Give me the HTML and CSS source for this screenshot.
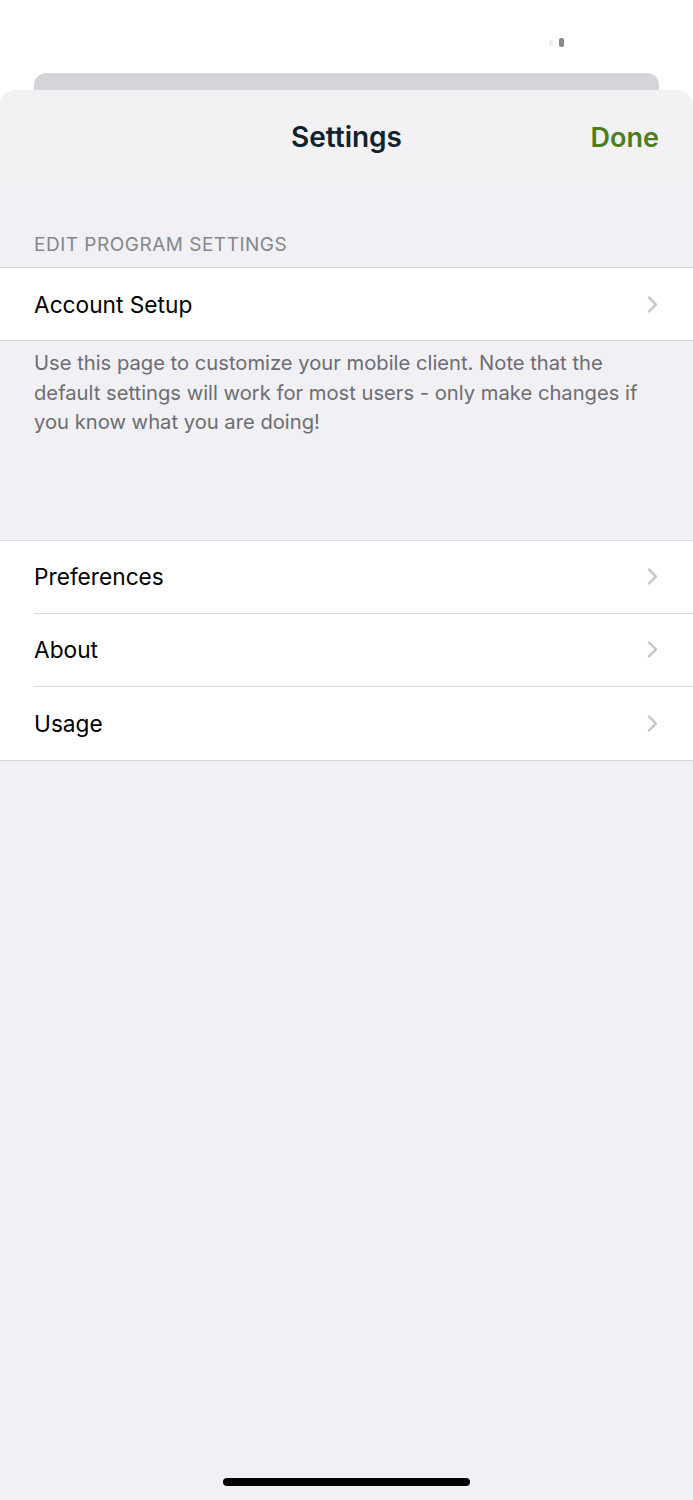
FILE: index.html
```html
<!DOCTYPE html>
<html lang="en" dir="ltr">

<head>
    <meta charset="utf-8">
    <title>Settings</title>
    <link rel="stylesheet" href="styles.css">
</head>

<body>
    <div id="status">
        <span class="dot small"></span>
        <span class="dot big"></span>
    </div>
    <div id="backcard"></div>

    <div id="sheet">
        <div id="navbar">
            <span class="spacer"></span>
            <h1>Settings</h1>
            <span id="done">Done</span>
        </div>

        <div class="section-label">EDIT PROGRAM SETTINGS</div>
        <div class="group">
            <div class="row">
                <span>Account Setup</span>
                <svg class="chevron" width="11" height="17" viewBox="0 0 11 17"><path d="M2 1.5 L9 8.5 L2 15.5" /></svg>
            </div>
        </div>
        <div class="section-footer">Use this page to customize your mobile client. Note that the default settings will work for most users - only make changes if you know what you are doing!</div>

        <div class="group second">
            <div class="row">
                <span>Preferences</span>
                <svg class="chevron" width="11" height="17" viewBox="0 0 11 17"><path d="M2 1.5 L9 8.5 L2 15.5" /></svg>
            </div>
            <div class="row">
                <span>About</span>
                <svg class="chevron" width="11" height="17" viewBox="0 0 11 17"><path d="M2 1.5 L9 8.5 L2 15.5" /></svg>
            </div>
            <div class="row">
                <span>Usage</span>
                <svg class="chevron" width="11" height="17" viewBox="0 0 11 17"><path d="M2 1.5 L9 8.5 L2 15.5" /></svg>
            </div>
        </div>

        <div id="home"></div>
    </div>
</body>

</html>
```

FILE: styles.css
```css
body {
    margin: 0;
    background-color: #ffffff;
    font-family: Inter, "Liberation Sans", Arial, sans-serif;
    color: #000000;
}

#status {
    height: 73px;
    box-sizing: border-box;
    display: flex;
    justify-content: flex-end;
    align-items: flex-start;
    gap: 6px;
    padding: 38px 129px 0 0;
}

.dot {
    display: block;
    border-radius: 1px;
}

.dot.small {
    width: 4px;
    height: 6px;
    margin-top: 2px;
    background-color: #ececee;
}

.dot.big {
    width: 5px;
    height: 9px;
    border-radius: 2px;
    background-color: #8a8a8c;
}

#backcard {
    height: 17px;
    margin: 0 34px;
    background-color: #d4d5d8;
    border-radius: 12px 12px 0 0;
}

#sheet {
    height: 1410px;
    display: flex;
    flex-direction: column;
    background-color: #f0f0f5;
    border-radius: 16px 16px 0 0;
    overflow: hidden;
}

#navbar {
    height: 94px;
    box-sizing: border-box;
    display: flex;
    align-items: center;
    justify-content: space-between;
    padding: 0 34px 0 34px;
    background-color: #f2f2f4;
}

#navbar .spacer {
    width: 70px;
}

h1 {
    margin: 0;
    font-size: 28px;
    font-weight: 600;
    color: #10222e;
}

#done {
    width: 70px;
    text-align: right;
    font-size: 27px;
    font-weight: 600;
    color: #4c7d1c;
}

.section-label {
    height: 83px;
    box-sizing: border-box;
    display: flex;
    align-items: flex-end;
    padding: 0 34px 11px 34px;
    font-size: 19px;
    line-height: 22px;
    letter-spacing: 0.5px;
    color: #86868b;
}

.group {
    background-color: #ffffff;
    border-top: 1px solid #dadadd;
    border-bottom: 1px solid #dadadd;
}

.group.second {
    margin-top: 103px;
}

.row {
    height: 72px;
    display: flex;
    align-items: center;
    justify-content: space-between;
    margin-left: 34px;
    padding-right: 35px;
    font-size: 22.7px;
}

.row + .row {
    height: 72.5px;
    border-top: 1px solid #dadadd;
}

.chevron path {
    fill: none;
    stroke: #c4c4c8;
    stroke-width: 2.3;
    stroke-linecap: round;
    stroke-linejoin: round;
}

.section-footer {
    padding: 7px 34px 0 34px;
    font-size: 20.2px;
    line-height: 29.5px;
    color: #6d6d72;
}

#home {
    width: 247px;
    height: 8px;
    margin: auto auto 14px auto;
    border-radius: 4px;
    background-color: #000000;
}
```
